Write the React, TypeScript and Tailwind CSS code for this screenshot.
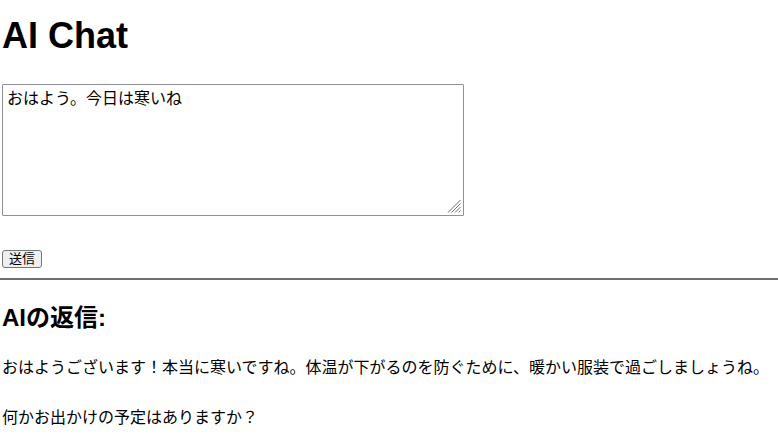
export default function App() {
  return (
    <div className="px-[2px] font-['Liberation_Sans','Noto_Sans_CJK_JP',sans-serif] text-black bg-white min-h-screen">
      <h1 className="pt-[14px] text-[36px] font-bold leading-[44px]">AI Chat</h1>

      <div className="relative mt-[26px] w-[462px] h-[132px]">
        <textarea
          className="block w-full h-full resize-none border border-[#8f8f9d] rounded-[1px] px-[4px] py-[2px] text-[16px] leading-[24px] font-['Liberation_Sans','Noto_Sans_CJK_JP',sans-serif] outline-none"
          defaultValue="おはよう。今日は寒いね"
        />
        {/* resize grip */}
        <svg
          className="absolute right-[3px] bottom-[3px] pointer-events-none"
          width="14"
          height="14"
          viewBox="0 0 14 14"
          stroke="#6b6b6b"
          strokeWidth="1"
        >
          <line x1="13.5" y1="1" x2="1" y2="13.5" />
          <line x1="13.5" y1="4.5" x2="4.5" y2="13.5" />
          <line x1="13.5" y1="8" x2="8" y2="13.5" />
          <line x1="13.5" y1="11.5" x2="11.5" y2="13.5" />
        </svg>
      </div>

      <button className="mt-[34px] block h-[18px] px-[6px] text-[13px] leading-[16px] bg-[#efefef] border border-[#767676] rounded-[3px]">
        送信
      </button>

      <hr className="mt-[10px] -mx-[2px] border-t-2 border-[#6e6e6e]" />

      <h2 className="mt-[22px] text-[24px] font-bold leading-[32px]">AIの返信:</h2>
      <p className="mt-[22px] text-[16px] leading-[24px]">
        おはようございます！本当に寒いですね。体温が下がるのを防ぐために、暖かい服装で過ごしましょうね。
      </p>
      <p className="mt-[26px] text-[16px] leading-[24px]">何かお出かけの予定はありますか？</p>
    </div>
  );
}
